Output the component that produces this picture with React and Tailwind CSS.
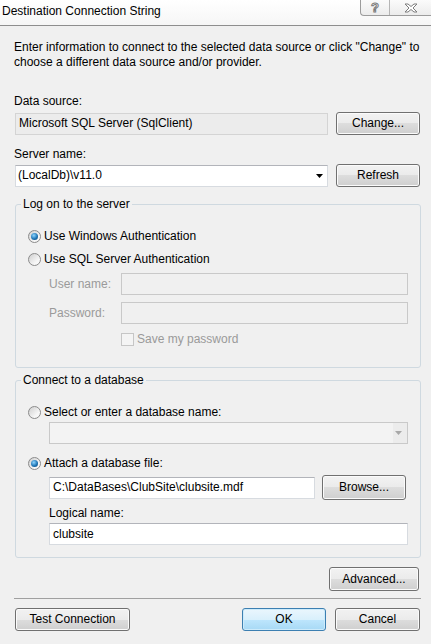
import React from "react";

const btn =
  "h-[23px] rounded-[3px] border border-[#707070] bg-[linear-gradient(#f2f2f2_0%,#ebebeb_50%,#dddddd_50%,#cfcfcf_100%)] shadow-[inset_0_0_0_1px_#fbfbfb] flex items-center justify-center text-black";

const Radio = ({ checked }) => (
  <span className="w-[13px] h-[13px] rounded-full border border-[#8b8b8b] bg-[linear-gradient(135deg,#cfcfcf,#f7f7f7_70%)] flex items-center justify-center shrink-0">
    {checked && (
      <span className="w-[7px] h-[7px] rounded-full bg-[radial-gradient(circle_at_40%_35%,#8fd6ff,#1f76b6_55%,#0a3f6e_100%)]" />
    )}
  </span>
);

const Arrow = ({ color = "#000" }) => (
  <svg width="7" height="4" viewBox="0 0 7 4">
    <path d="M0 0h7L3.5 4z" fill={color} />
  </svg>
);

const TextBox = ({ value, disabled, readOnly, className = "" }) => (
  <div
    className={`h-[22px] flex items-center px-[3px] border ${
      disabled
        ? "border-[#c9c9c9] bg-[#f0f0f0]"
        : readOnly
        ? "border-[#d4d4d4] bg-[#ececec]"
        : "border-[#d7dbe0] border-t-[#b2b4ba] bg-white"
    } ${className}`}
  >
    {value}
  </div>
);

export default function App() {
  return (
    <div className="w-[431px] h-[644px] bg-[#f0f0f0] overflow-hidden flex flex-col text-[12px] leading-[15px] text-black whitespace-nowrap font-['Liberation_Sans',Arial,sans-serif]">
      {/* title bar */}
      <div className="h-[26px] shrink-0 flex items-start justify-between border-b border-[#8e8e8e] bg-[linear-gradient(#ffffff,#f6f6f6)]">
        <span className="pl-[2px] pt-[4px]">Destination Connection String</span>
        <div className="w-[71px] h-[16px] flex border-l border-b border-[#9c9c9c] rounded-bl-[4px] bg-[linear-gradient(#fbfbfb,#ececec)]">
          <div className="w-[29px] flex items-center justify-center border-r border-[#b5b5b5] text-[13px] leading-[13px] font-bold text-white [-webkit-text-stroke:1px_#7a7a7a]">
            ?
          </div>
          <div className="flex-1 flex items-center justify-center">
            <svg width="14" height="10" viewBox="0 0 14 10">
              <path
                d="M1 1h3l3 2.5L10 1h3L9 5l4 4h-3L7 6.5 4 9H1l4-4z"
                fill="#fff"
                stroke="#7d7d7d"
                strokeWidth="1"
                strokeLinejoin="round"
              />
            </svg>
          </div>
        </div>
      </div>

      {/* body */}
      <div className="flex flex-col pl-[15px] pr-[10px]">
        <p className="mt-[14px] -ml-[1px]">
          Enter information to connect to the selected data source or click "Change" to
          <br />
          choose a different data source and/or provider.
        </p>

        <p className="mt-[24px] -ml-[1px]">Data source:</p>
        <div className="mt-[3px] flex items-center gap-[8px]">
          <TextBox readOnly value="Microsoft SQL Server (SqlClient)" className="w-[313px]" />
          <button className={`${btn} w-[84px]`}>Change...</button>
        </div>

        <p className="mt-[12px] -ml-[1px]">Server name:</p>
        <div className="mt-[2px] flex items-center gap-[8px]">
          <div className="w-[313px] h-[22px] flex items-center justify-between pl-[2px] pr-[4px] border border-[#d7dbe0] border-t-[#b2b4ba] bg-white">
            <span>(LocalDb)\v11.0</span>
            <Arrow />
          </div>
          <button className={`${btn} w-[84px]`}>Refresh</button>
        </div>

        {/* log on group */}
        <fieldset className="mt-[10px] w-[406px] border border-[#cfd9e0] rounded-[3px] px-0 pb-[20px]">
          <legend className="ml-[5px] px-[2px]">Log on to the server</legend>
          <div className="flex flex-col pl-[12px] pr-[12px]">
            <label className="mt-[17px] flex items-center gap-[3px]">
              <Radio checked />
              <span>Use Windows Authentication</span>
            </label>
            <label className="mt-[8px] flex items-center gap-[3px]">
              <Radio />
              <span>Use SQL Server Authentication</span>
            </label>
            <div className="mt-[6px] flex items-center">
              <span className="w-[93px] shrink-0 pl-[21px] text-[#9a9a9a]">User name:</span>
              <TextBox disabled className="flex-1" />
            </div>
            <div className="mt-[7px] flex items-center">
              <span className="w-[93px] shrink-0 pl-[21px] text-[#9a9a9a]">Password:</span>
              <TextBox disabled className="flex-1" />
            </div>
            <label className="mt-[8px] ml-[93px] flex items-center gap-[3px] text-[#9a9a9a]">
              <span className="w-[13px] h-[13px] border border-[#c6c6c6] bg-[#f4f4f4]" />
              <span>Save my password</span>
            </label>
          </div>
        </fieldset>

        {/* connect group */}
        <fieldset className="mt-[5px] w-[406px] border border-[#cfd9e0] rounded-[3px] px-0 pb-[12px]">
          <legend className="ml-[5px] px-[2px]">Connect to a database</legend>
          <div className="flex flex-col pl-[12px] pr-[12px]">
            <label className="mt-[17px] flex items-center gap-[3px]">
              <Radio />
              <span>Select or enter a database name:</span>
            </label>
            <div className="mt-[2px] ml-[21px] h-[22px] flex items-center justify-end pr-[5px] border border-[#c9c9c9] bg-[linear-gradient(90deg,#f3f3f3_96%,#ececec_96%)]">
              <Arrow color="#a8a8a8" />
            </div>
            <label className="mt-[12px] flex items-center gap-[3px]">
              <Radio checked />
              <span>Attach a database file:</span>
            </label>
            <div className="mt-[4px] ml-[21px] flex items-center gap-[7px]">
              <TextBox value="C:\DataBases\ClubSite\clubsite.mdf" className="w-[266px]" />
              <button className={`${btn} w-[84px] h-[25px]`}>Browse...</button>
            </div>
            <p className="mt-[6px] ml-[21px]">Logical name:</p>
            <TextBox value="clubsite" className="mt-[2px] ml-[21px]" />
          </div>
        </fieldset>

        <button className={`${btn} mt-[9px] self-end mr-[2px] w-[90px] h-[24px]`}>Advanced...</button>

        <div className="mt-[7px] -ml-[1px] w-[407px] border-t border-[#a0a0a0]" />

        <div className="mt-[9px] flex items-center">
          <button className={`${btn} w-[115px]`}>Test Connection</button>
          <button className="ml-auto w-[84px] h-[23px] rounded-[3px] border border-[#3c7fb1] bg-[linear-gradient(#eaf6fd_0%,#d9f0fc_50%,#bee6fd_50%,#a7d9f5_100%)] shadow-[inset_0_0_0_1px_#cdebfb] flex items-center justify-center">
            OK
          </button>
          <button className={`${btn} ml-[9px] mr-[1px] w-[85px]`}>Cancel</button>
        </div>
      </div>
    </div>
  );
}
